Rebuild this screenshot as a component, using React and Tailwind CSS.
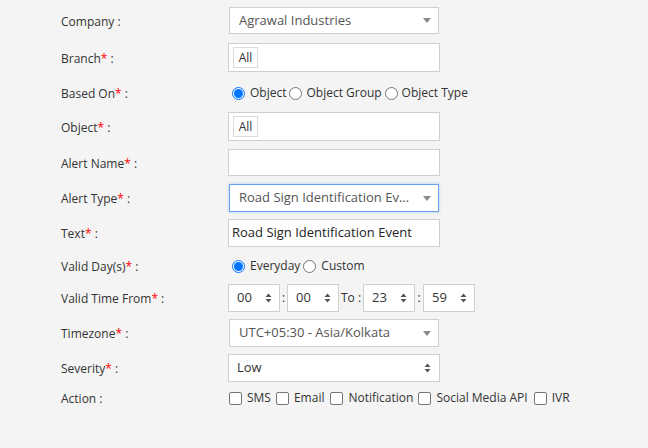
import React from "react";

const labelCls = "w-[167px] shrink-0 text-[12px] text-[#333] leading-none pt-[2px]";

function Req() {
  return <span className="text-[#f00]">*</span>;
}

function Label({ text, req }) {
  return (
    <div className={labelCls}>
      {text}
      {req ? <Req /> : null} :
    </div>
  );
}

function Caret() {
  return (
    <svg width="8" height="5" viewBox="0 0 8 5" className="shrink-0">
      <path d="M0 0 L8 0 L4 5 Z" fill="#8a8a8a" />
    </svg>
  );
}

function Spinner() {
  return (
    <svg width="7" height="10" viewBox="0 0 7 10" className="shrink-0">
      <path d="M0.5 4 L6.5 4 L3.5 0.5 Z" fill="#555" />
      <path d="M0.5 6 L6.5 6 L3.5 9.5 Z" fill="#555" />
    </svg>
  );
}

function SelectBox({ text, focused }) {
  return (
    <div
      className={
        "ml-[1px] w-[210px] h-full bg-white flex items-center pl-[9px] pr-[7px] text-[13px] text-[#555] " +
        (focused
          ? "border border-[#66a3ee] shadow-[0_0_3px_rgba(102,163,238,0.5)]"
          : "border border-[#cfcfcf]")
      }
    >
      <span className="flex-1 whitespace-nowrap overflow-hidden">{text}</span>
      <Caret />
    </div>
  );
}

function TagInput() {
  return (
    <div className="w-[212px] h-full bg-white border border-[#cfcfcf] flex items-center pl-[4px]">
      <div className="h-[21px] w-[25px] border border-[#dcdcdc] bg-white flex items-center justify-center text-[12px] text-[#333]">
        All
      </div>
    </div>
  );
}

function TimeBox({ v }) {
  return (
    <div className="w-[52px] h-full bg-white border border-[#cfcfcf] flex items-center pl-[8px] pr-[7px] text-[13px] text-[#333]">
      <span className="flex-1">{v}</span>
      <Spinner />
    </div>
  );
}

function Radio({ checked }) {
  return checked ? (
    <span className="w-[13px] h-[13px] rounded-full border border-[#0075ff] flex items-center justify-center shrink-0 bg-white">
      <span className="w-[9px] h-[9px] rounded-full bg-[#0075ff] block" />
    </span>
  ) : (
    <span className="w-[13px] h-[13px] rounded-full border border-[#767676] bg-white shrink-0 block" />
  );
}

function Check() {
  return <span className="w-[13px] h-[13px] rounded-[2px] border border-[#767676] bg-white shrink-0 block" />;
}

export default function App() {
  return (
    <div
      className="w-[648px] h-[448px] bg-[#f4f4f4] pl-[61px] pt-[7px] flex flex-col"
      style={{ fontFamily: '"Open Sans", "Noto Sans", sans-serif' }}
    >
      <div className="flex items-center h-[27px] mb-[9px]">
        <Label text="Company" />
        <SelectBox text="Agrawal Industries" />
      </div>
      <div className="flex items-center h-[29px] mb-[9px]">
        <Label text="Branch" req />
        <TagInput />
      </div>
      <div className="flex items-center h-[24px] mb-[7px]">
        <Label text="Based On" req />
        <div className="flex items-center text-[12px] text-[#333]">
          <span className="ml-[4px]"><Radio checked /></span>
          <span className="ml-[5px]">Object</span>
          <span className="ml-[3px]"><Radio /></span>
          <span className="ml-[4px]">Object Group</span>
          <span className="ml-[3px]"><Radio /></span>
          <span className="ml-[4px]">Object Type</span>
        </div>
      </div>
      <div className="flex items-center h-[29px] mb-[8px]">
        <Label text="Object" req />
        <TagInput />
      </div>
      <div className="flex items-center h-[27px] mb-[8px]">
        <Label text="Alert Name" req />
        <div className="w-[212px] h-full bg-white border border-[#cfcfcf]" />
      </div>
      <div className="flex items-center h-[28px] mb-[7px]">
        <Label text="Alert Type" req />
        <SelectBox text="Road Sign Identification Ev..." focused />
      </div>
      <div className="flex items-center h-[28px] mb-[8px]">
        <Label text="Text" req />
        <div className="w-[212px] h-full bg-white border border-[#cfcfcf] flex items-center pl-[3px] text-[13px] text-[#222]">
          Road Sign Identification Event
        </div>
      </div>
      <div className="flex items-center h-[22px] mb-[7px]">
        <Label text="Valid Day(s)" req />
        <div className="flex items-center text-[12px] text-[#333]">
          <span className="ml-[4px]"><Radio checked /></span>
          <span className="ml-[5px]">Everyday</span>
          <span className="ml-[3px]"><Radio /></span>
          <span className="ml-[5px]">Custom</span>
        </div>
      </div>
      <div className="flex items-center h-[28px] mb-[7px]">
        <Label text="Valid Time From" req />
        <div className="flex items-center h-full text-[12px] text-[#333]">
          <TimeBox v="00" />
          <span className="w-[7px] text-center">:</span>
          <TimeBox v="00" />
          <span className="w-[24px] text-center">To :</span>
          <TimeBox v="23" />
          <span className="w-[8px] text-center">:</span>
          <TimeBox v="59" />
        </div>
      </div>
      <div className="flex items-center h-[28px] mb-[7px]">
        <Label text="Timezone" req />
        <SelectBox text="UTC+05:30 - Asia/Kolkata" />
      </div>
      <div className="flex items-center h-[28px] mb-[6px]">
        <Label text="Severity" req />
        <div className="w-[212px] h-full bg-white border border-[#cfcfcf] flex items-center pl-[8px] pr-[8px] text-[13px] text-[#333]">
          <span className="flex-1">Low</span>
          <Spinner />
        </div>
      </div>
      <div className="flex items-center h-[20px]">
        <Label text="Action" />
        <div className="flex items-center text-[12px] text-[#333]">
          <span className="ml-[1px]"><Check /></span>
          <span className="ml-[5px]">SMS</span>
          <span className="ml-[5px]"><Check /></span>
          <span className="ml-[5px]">Email</span>
          <span className="ml-[6px]"><Check /></span>
          <span className="ml-[5px]">Notification</span>
          <span className="ml-[5px]"><Check /></span>
          <span className="ml-[5px]">Social Media API</span>
          <span className="ml-[6px]"><Check /></span>
          <span className="ml-[5px]">IVR</span>
        </div>
      </div>
    </div>
  );
}
